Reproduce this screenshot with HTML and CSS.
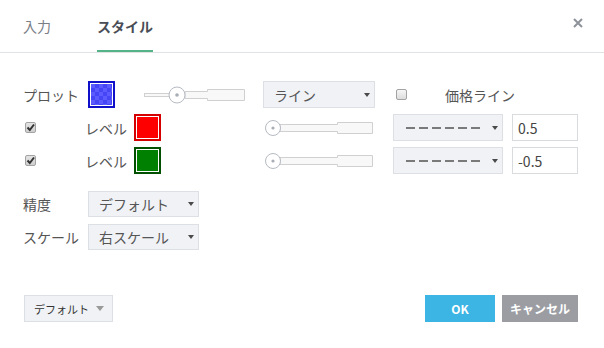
FILE: index.html
```html
<!DOCTYPE html>
<html lang="ja">
<head>
  <meta charset="UTF-8">
  <title>スタイル</title>
  <link rel="stylesheet" href="styles.css">
</head>
<body>
  <div class="dialog">
    <div class="tabs">
      <div class="tab">入力</div>
      <div class="tab active">スタイル</div>
      <svg class="close" width="10" height="10" viewBox="0 0 10 10">
        <path d="M1 1 L9 9 M9 1 L1 9" stroke="#8e929a" stroke-width="2"/>
      </svg>
    </div>

    <div class="content">
      <!-- plot row -->
      <div class="row plot-row">
        <span class="label plot-label">プロット</span>
        <span class="swatch blue"><span class="fill"></span></span>
        <svg class="slider plot-slider" width="101" height="20" viewBox="0 0 101 20">
          <rect x="0.5" y="8.5" width="25" height="3" fill="#f8f8f8" stroke="#d0d0d0"/>
          <path d="M41 6.5 H63.5 V4.5 H100.5 V15.5 H63.5 V13.5 H41 Z" fill="#f8f8f8" stroke="#d0d0d0"/>
          <circle cx="33" cy="10" r="8" fill="#fff" stroke="#b6bac2"/>
          <circle cx="33" cy="10" r="1.8" fill="#a9adb5"/>
        </svg>
        <div class="select line-select"><span>ライン</span><i class="caret"></i></div>
        <span class="checkbox price-check"></span>
        <span class="label price-label">価格ライン</span>
      </div>

      <!-- levels -->
      <div class="row level-row">
        <span class="checkbox checked">
          <svg width="9" height="9" viewBox="0 0 9 9"><path d="M1.5 4.5 L3.8 7 L8 1.5" fill="none" stroke="#333" stroke-width="2"/></svg>
        </span>
        <span class="label level-label">レベル</span>
        <span class="swatch red"><span class="fill"></span></span>
        <svg class="slider level-slider" width="108" height="20" viewBox="0 0 108 20">
          <path d="M15 6.5 H72.5 V4.5 H107.5 V15.5 H72.5 V13.5 H15 Z" fill="#f8f8f8" stroke="#d0d0d0"/>
          <circle cx="8" cy="10" r="7.5" fill="#fff" stroke="#b6bac2"/>
          <circle cx="8" cy="10" r="1.6" fill="#a9adb5"/>
        </svg>
        <div class="select dash-select"><span class="dashes"></span><i class="caret"></i></div>
        <input class="value" type="text" value="0.5">
      </div>

      <div class="row level-row">
        <span class="checkbox checked">
          <svg width="9" height="9" viewBox="0 0 9 9"><path d="M1.5 4.5 L3.8 7 L8 1.5" fill="none" stroke="#333" stroke-width="2"/></svg>
        </span>
        <span class="label level-label">レベル</span>
        <span class="swatch green"><span class="fill"></span></span>
        <svg class="slider level-slider" width="108" height="20" viewBox="0 0 108 20">
          <path d="M15 6.5 H72.5 V4.5 H107.5 V15.5 H72.5 V13.5 H15 Z" fill="#f8f8f8" stroke="#d0d0d0"/>
          <circle cx="8" cy="10" r="7.5" fill="#fff" stroke="#b6bac2"/>
          <circle cx="8" cy="10" r="1.6" fill="#a9adb5"/>
        </svg>
        <div class="select dash-select"><span class="dashes"></span><i class="caret"></i></div>
        <input class="value" type="text" value="-0.5">
      </div>

      <div class="options">
        <div class="row opt-row">
          <span class="label opt-label">精度</span>
          <div class="select small-select"><span>デフォルト</span><i class="caret"></i></div>
        </div>
        <div class="row opt-row">
          <span class="label opt-label">スケール</span>
          <div class="select small-select"><span>右スケール</span><i class="caret"></i></div>
        </div>
      </div>
    </div>

    <div class="footer">
      <div class="select default-btn"><span>デフォルト</span><i class="caret"></i></div>
      <button class="btn ok">OK</button>
      <button class="btn cancel">キャンセル</button>
    </div>
  </div>
</body>
</html>
```

FILE: styles.css
```css
body {
  margin: 0;
  font-family: "Noto Sans CJK JP", "Noto Sans", sans-serif;
  font-size: 14px;
  color: #555;
  background: #fff;
}
.dialog {
  width: 604px;
  height: 348px;
  display: flex;
  flex-direction: column;
}

/* header */
.tabs {
  display: flex;
  align-items: center;
  height: 52px;
  padding-left: 23px;
  border-bottom: 1px solid #e0e3e6;
}
.tab {
  height: 52px;
  line-height: 52px;
  color: #7a7e86;
  margin-right: 46px;
}
.tab.active {
  font-weight: bold;
  color: #494d56;
  box-shadow: inset 0 -2px 0 #55b487;
}
.close {
  margin-left: auto;
  margin-right: 21px;
  margin-top: -6px;
}

/* rows */
.content {
  padding: 28px 0 0 23px;
  display: flex;
  flex-direction: column;
  gap: 6px;
}
.row {
  display: flex;
  align-items: center;
  height: 27px;
}
.label {
  line-height: 20px;
  white-space: nowrap;
}
.plot-label { width: 65px; }
.level-label { margin-left: 49px; }
.price-label { margin-left: 38px; }

.swatch {
  box-sizing: border-box;
  width: 27px;
  height: 27px;
  border: 2px solid;
  padding: 1px;
  background: #fff;
  display: flex;
}
.swatch .fill { flex: 1; }
.swatch.blue { border-color: #1010c8; }
.swatch.blue .fill {
  background: repeating-conic-gradient(#4646f6 0 25%, #5b5bff 0 50%) 0 0 / 8px 8px;
}
.swatch.red { border-color: #d40000; margin-left: 7px; }
.swatch.red .fill { background: #ff0000; }
.swatch.green { border-color: #005000; margin-left: 7px; }
.swatch.green .fill { background: #008000; }

.plot-slider { margin-left: 29px; }
.level-slider { margin-left: 104px; }

.checkbox {
  box-sizing: border-box;
  width: 11px;
  height: 11px;
  border: 1px solid #a3a3a3;
  border-radius: 2px;
  background: linear-gradient(#f6f6f6, #dcdcdc);
  display: flex;
  align-items: center;
  justify-content: center;
}
.checkbox.checked {
  margin-left: 2px;
  background: linear-gradient(#e4e4e4, #cfcfcf);
}
.price-check { margin-left: 21px; }

/* selects */
.select {
  box-sizing: border-box;
  height: 27px;
  display: flex;
  align-items: center;
  justify-content: space-between;
  padding: 0 4px 0 10px;
  background: #f0f2f5;
  border: 1px solid #dcdfe3;
  color: #555;
  white-space: nowrap;
}
.caret {
  width: 0;
  height: 0;
  border-left: 3.5px solid transparent;
  border-right: 3.5px solid transparent;
  border-top: 4px solid #4a4a4a;
}
.line-select { width: 112px; margin-left: 18px; }
.dash-select { width: 110px; margin-left: 20px; padding-left: 12px; }
.dashes {
  width: 74px;
  height: 2px;
  background: repeating-linear-gradient(90deg, #7a7a7a 0 9px, transparent 9px 13px);
}
.value {
  box-sizing: border-box;
  width: 66px;
  height: 27px;
  margin: 0 0 0 9px;
  padding: 0 5px;
  border: 1px solid #d9dcdf;
  font-family: inherit;
  font-size: 14px;
  color: #444;
  outline: none;
}

.options {
  margin-top: 11px;
  display: flex;
  flex-direction: column;
  gap: 7px;
}
.opt-row { height: 26px; }
.opt-label { width: 65px; }
.small-select { width: 111px; height: 26px; }

/* footer */
.footer {
  margin-top: 45px;
  display: flex;
  align-items: center;
  padding: 0 26px 0 24px;
  gap: 7px;
}
.default-btn {
  width: 89px;
  font-size: 11px;
  padding: 0 8px 0 9px;
  color: #333;
  margin-right: auto;
}
.default-btn .caret {
  border-left-width: 4px;
  border-right-width: 4px;
  border-top: 5px solid #999;
}
.btn {
  height: 27px;
  border: none;
  color: #fff;
  font-family: inherit;
  font-size: 12px;
  font-weight: bold;
  cursor: pointer;
}
.ok { width: 70px; background: #3cb4e4; }
.cancel { width: 76px; background: #9b9da3; }
```
